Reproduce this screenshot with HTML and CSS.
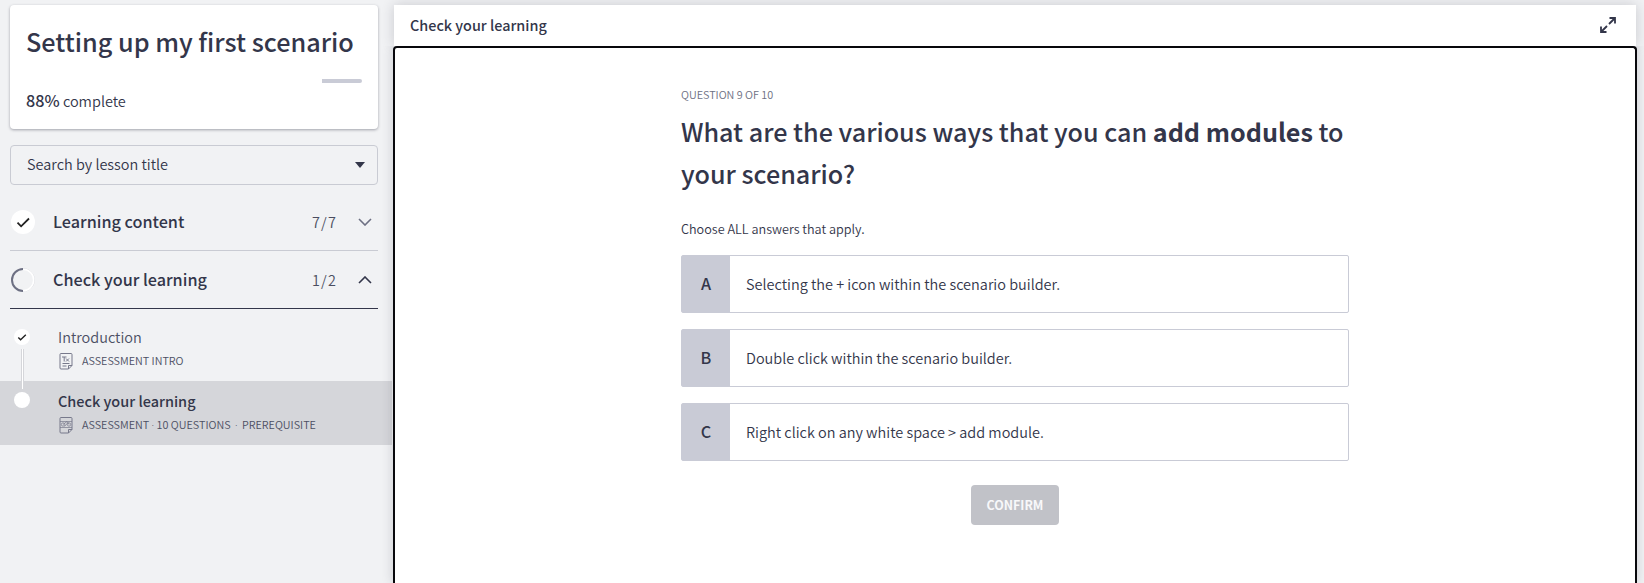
FILE: index.html
```html
<!DOCTYPE html>
<html lang="en">
<head>
<meta charset="utf-8">
<title>Check your learning</title>
<link rel="stylesheet" href="styles.css">
</head>
<body>
<div class="page">
  <aside class="sidebar">
    <section class="course">
      <h1 class="course-title"><span>Setting up my first scenario</span></h1>
      <div class="progress"><div class="progress-rest"></div></div>
      <p class="complete"><span><b>88%</b> complete</span></p>
    </section>
    <div class="search"><span>Search by lesson title</span>
      <svg width="10" height="6" viewBox="0 0 10 6"><path d="M0 0h10L5 6z" fill="#33364a"/></svg>
    </div>
    <div class="group">
      <svg class="group-icon" width="24" height="24" viewBox="0 0 24 24"><circle cx="12" cy="12" r="12" fill="#fff"/><path d="M6.500 12.700l3.600 3.600L18 8.500" fill="none" stroke="#222" stroke-width="1.800"/></svg>
      <span class="group-name">Learning content</span>
      <span class="group-count">7/7</span>
      <svg width="14" height="8" viewBox="0 0 14 8"><path d="M1 1l6 6 6-6" fill="none" stroke="#6d7083" stroke-width="1.600"/></svg>
    </div>
    <div class="group open">
      <svg class="group-icon" width="24" height="24" viewBox="0 0 24 24"><path d="M12 .6a11.400 11.400 0 0 1 0 22.800" fill="none" stroke="#d5d6dc" stroke-width="1"/><path d="M12 1.300a10.700 10.700 0 0 1 0 21.400" fill="none" stroke="#fff" stroke-width="1.600"/><path d="M12 1a11 11 0 0 0 0 22" fill="none" stroke="#6d7083" stroke-width="2"/></svg>
      <span class="group-name">Check your learning</span>
      <span class="group-count">1/2</span>
      <svg width="14" height="8" viewBox="0 0 14 8"><path d="M1 7l6-6 6 6" fill="none" stroke="#33364a" stroke-width="1.600"/></svg>
    </div>
    <div class="lessons">
      <div class="lesson">
        <svg class="dot" width="16" height="16" viewBox="0 0 16 16"><circle cx="8" cy="8" r="8" fill="#fff"/><path d="M4.300 8.400l2.300 2.300 5.200-5" fill="none" stroke="#222" stroke-width="1.400"/></svg>
        <i class="link"></i>
        <div class="lesson-name">Introduction</div>
        <div class="meta">
          <svg width="14" height="17" viewBox="0 0 14 17" fill="none" stroke="#77798b"><path d="M2 .5h10q1 0 1 1v11L9.500 16H2q-1 0-1-1V1.500q0-1 1-1z"/><path d="M13 12.500H9.500V16M3.500 10.500h7M3.500 13h4M3 4h4.500M5.200 4v4.500M7 5.500l3 3M10 5.500l-3 3"/></svg>
          <span>ASSESSMENT INTRO</span>
        </div>
      </div>
      <div class="lesson current">
        <svg class="dot" width="16" height="16" viewBox="0 0 16 16"><circle cx="8" cy="8" r="8" fill="#fff"/></svg>
        <div class="lesson-name">Check your learning</div>
        <div class="meta">
          <svg width="14" height="17" viewBox="0 0 14 17" fill="none" stroke="#77798b"><path d="M2 .5h10q1 0 1 1v11L9.500 16H2q-1 0-1-1V1.500q0-1 1-1z"/><path d="M13 12.500H9.500V16"/><g stroke-width=".7"><circle cx="4" cy="7.500" r="1.700"/><circle cx="10" cy="7.500" r="1.700"/><path d="M4 7.500l4-3 2 3M5.500 9.500l3.500-4M1 4.500h12M1 10.500h12"/></g></svg>
          <span>ASSESSMENT <em>·</em> 10 QUESTIONS <em class="wide">·</em> PREREQUISITE</span>
        </div>
      </div>
    </div>
  </aside>
  <main class="main">
    <header class="bar"><span class="bar-title">Check your learning</span>
      <svg width="16" height="16" viewBox="0 0 16 16" fill="none" stroke="#33364a" stroke-width="1.800"><path d="M9 7l5.500-5.500M9.500 1H15v5.500M7 9l-5.500 5.500M1 9.500V15h5.500"/></svg>
    </header>
    <section class="panel">
      <div class="quiz">
        <div class="step"><span>QUESTION 9 OF 10</span></div>
        <h2 class="question"><span>What are the various ways that you can <b>add modules</b> to</span><br><span>your scenario?</span></h2>
        <p class="hint"><span>Choose ALL answers that apply.</span></p>
        <div class="option"><b class="letter">A</b><span class="answer">Selecting the + icon within the scenario builder.</span></div>
        <div class="option"><b class="letter">B</b><span class="answer">Double click within the scenario builder.</span></div>
        <div class="option"><b class="letter">C</b><span class="answer">Right click on any white space &gt; add module.</span></div>
        <button class="confirm">CONFIRM</button>
      </div>
    </section>
  </main>
</div>
</body>
</html>
```
FILE: styles.css
```css
* { box-sizing: border-box; }
body { margin: 0; background: #f1f2f4; color: #33364a; font-family: "Noto Sans CJK SC", "Noto Sans", sans-serif; overflow: hidden; }
h1, h2, p { margin: 0; }
svg { display: block; flex: none; }
.page { display: flex; height: 583px; }
.sidebar { width: 393px; padding-top: 5px; flex: none; }
.course { margin: 0 15px 0 10px; height: 124px; background: #fff; border-radius: 4px; box-shadow: 0 1px 3px rgba(40,42,60,.4); padding: 0 16px; }
.course-title { font-size: 25.22px; font-weight: 500; line-height: 72px; height: 74px; white-space: nowrap; }
.progress { height: 4px; display: flex; justify-content: flex-end; }
.progress-rest { width: 40px; background: #c9cbd6; border-radius: 0 2px 2px 0; }
.complete { font-size: 14.5px; line-height: 34px; font-weight: 350; }
.complete b { font-weight: 500; font-size: 16.2px; }
.search { margin: 16px 15px 0 10px; height: 40px; border: 1px solid #c9cbd3; border-radius: 4px; padding: 0 12px 0 16px; display: flex; align-items: center; justify-content: space-between; font-size: 14.48px; line-height: 20px; font-weight: 350; }
.search span { padding-bottom: 2px; }
.group { margin: 0 15px 0 10px; height: 58px; border-bottom: 1px solid #c9cbd3; display: flex; align-items: center; padding: 0 6px 0 1px; }
.search + .group { height: 66px; padding-top: 8px; }
.group.open { border-color: #33364a; }
.group-name { margin-left: 18px; flex: 1; font-size: 16.2px; line-height: 24px; padding-bottom: 2px; font-weight: 500; }
.group-count { font-size: 14.4px; font-weight: 350; letter-spacing: 1.2px; margin-right: 21px; color: #4a4d60; }
.lessons { padding-top: 8px; }
.lesson { width: 392px; height: 64px; padding: 8px 0 0 58px; position: relative; color: #4c4f63; }
.lesson.current { background: #d5d6da; }
.dot { position: absolute; left: 14px; top: 12px; }
.current .dot { top: 11px; }
.link { position: absolute; left: 21px; top: 32px; width: 3px; height: 40px; background: #fff; border: solid #d5d6da; border-width: 0 1px; z-index: 1; }
.lesson-name { font-size: 14.48px; line-height: 24px; font-weight: 350; }
.current .lesson-name { font-weight: 500; color: #33364a; }
.meta { display: flex; align-items: center; gap: 9px; height: 24px; font-size: 10.8px; padding-left: 1px; font-weight: 350; }
.meta span { padding-bottom: 2px; white-space: nowrap; }
.meta em { font-style: normal; font-family: "Open Sans", sans-serif; margin: 0; }
.meta em.wide { margin: 0 2px; }
.main { width: 1244px; padding-top: 5px; display: flex; flex-direction: column; }
.bar { height: 41px; margin: 0 1px; background: #fff; display: flex; align-items: center; justify-content: space-between; padding: 0 20px 2px 16px; box-shadow: 0 0 12px rgba(40,42,60,.2); }
.bar-title { font-size: 14.4px; font-weight: 500; }
.panel { flex: 1; background: #fff; border: 2px solid #08080c; border-bottom: 0; border-radius: 4px 4px 0 0; box-shadow: 0 0 12px rgba(40,42,60,.2); clip-path: inset(0 -14px 0 -14px); }
.quiz { margin-left: 286px; width: 668px; padding-top: 36px; }
.step { font-size: 10.8px; line-height: 20px; color: #6d7083; font-weight: 350; }
.question { font-size: 25.15px; line-height: 42px; height: 84px; margin-top: 6px; font-weight: 500; white-space: nowrap; }
.question b { font-weight: 700; }
.hint { font-size: 12.65px; line-height: 20px; margin: 25px 0 16px; font-weight: 350; }
.option { height: 58px; border: 1px solid #c9cbd6; border-radius: 2px; display: flex; align-items: center; margin-bottom: 16px; }
.letter { width: 48px; height: 56px; line-height: 55px; text-align: center; background: #c9cbd6; font-weight: 500; font-size: 16.2px; }
.answer { margin-left: 16px; font-size: 14.48px; line-height: 20px; font-weight: 350; }
.confirm { display: block; margin: 24px auto 0; width: 88px; height: 40px; border: 0; border-radius: 4px; background: #c1c2c8; color: #f8f8fa; font: 700 12.4px "Noto Sans CJK SC", sans-serif; padding: 0 0 1px; }
```
